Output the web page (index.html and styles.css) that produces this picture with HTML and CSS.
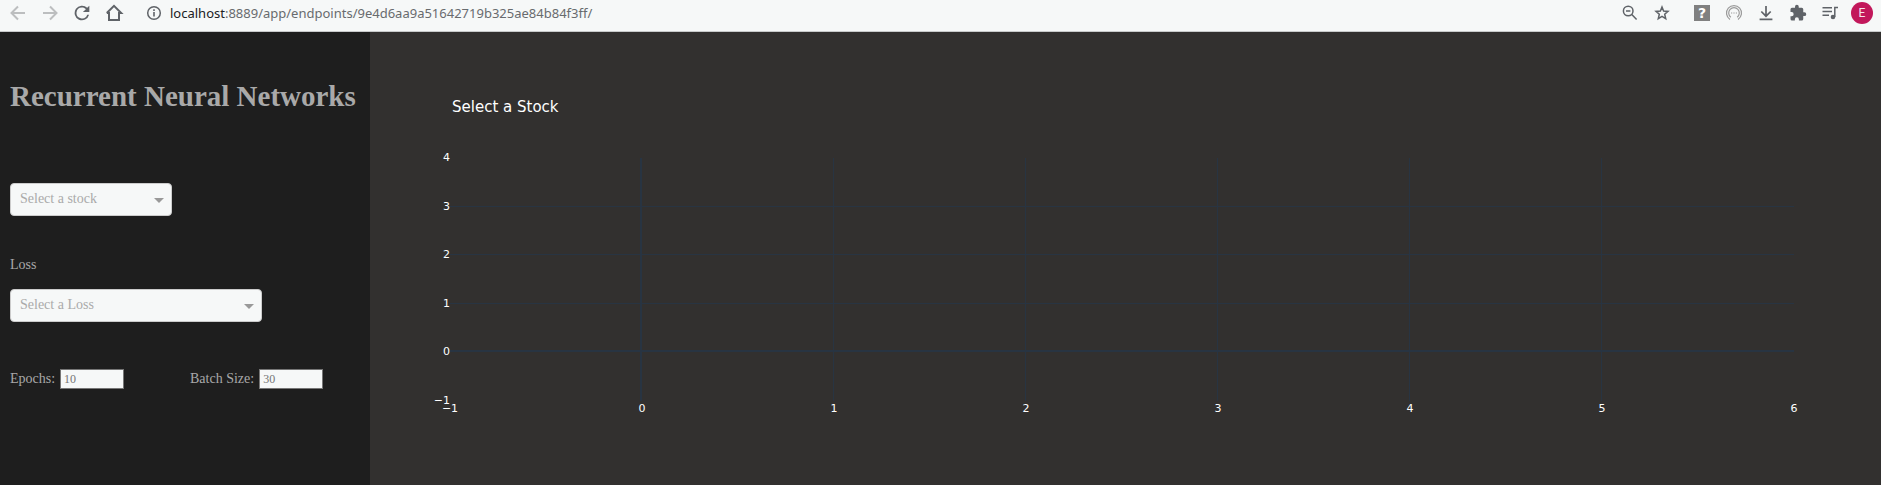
FILE: index.html
```html
<!DOCTYPE html>
<html lang="en">
<head>
<meta charset="utf-8">
<meta name="viewport" content="width=device-width, initial-scale=1">
<title>Recurrent Neural Networks</title>
<link rel="stylesheet" href="styles.css">
</head>
<body>
<header class="toolbar">
  <button class="tool tool-off" aria-label="Back"><svg viewBox="0 0 22 22"><path class="line" d="M18 11H5M11 4.500L4.500 11L11 17.500"/></svg></button>
  <button class="tool tool-off" aria-label="Forward"><svg viewBox="0 0 22 22"><path class="line" d="M4 11H17M11 4.500L17.500 11L11 17.500"/></svg></button>
  <button class="tool" aria-label="Reload"><svg viewBox="0 0 24 24"><path d="M17.650 6.350A8 8 0 1 0 19.730 14H17.650A6 6 0 1 1 12 6c1.660 0 3.140.69 4.220 1.780L13 11h7V4z"/></svg></button>
  <button class="tool" aria-label="Home"><svg viewBox="0 0 22 22"><path class="line" d="M6 10.500V18H16V10.500M3.800 11L11 3.800L18.200 11H15M7 11H3.800"/></svg></button>
  <div class="address">
    <button class="tool" aria-label="Site information"><svg viewBox="0 0 22 22"><circle class="line thin" cx="11" cy="11" r="6.300"/><path d="M10.200 10h1.600v4.600h-1.600zM10.200 7.200h1.600v1.700h-1.600z"/></svg></button>
    <span class="url"><span class="host">localhost</span>:8889/app/endpoints/9e4d6aa9a51642719b325ae84b84f3ff/</span>
  </div>
  <button class="tool" aria-label="Zoom"><svg viewBox="0 0 22 22"><circle class="line thin" cx="9.200" cy="9" r="4.800"/><path class="line thin" d="M12.800 12.600L17.600 17.600M7 9H11.400"/></svg></button>
  <button class="tool" aria-label="Bookmark"><svg viewBox="0 0 22 22"><path class="line thin" d="M11 5L12.600 9L17 9.400L13.700 12.200L14.700 16.600L11 14.300L7.300 16.600L8.300 12.200L5 9.400L9.400 9Z"/></svg></button>
  <button class="tool tool-first" aria-label="Help extension"><span class="help">?</span></button>
  <button class="tool" aria-label="Chat extension"><svg viewBox="0 0 22 22"><g class="ring"><path d="M7 17.400A7.500 7.500 0 1 1 15 17.400"/><path d="M7.800 15.200A5.300 5.300 0 1 1 14.200 15.200"/><path d="M8 11h1.200M10.400 11h1.200M12.800 11h1.200"/></g></svg></button>
  <button class="tool" aria-label="Downloads"><svg viewBox="0 0 22 22"><path class="line mid" d="M11 4V14M6.300 9.500L11 14.200L15.700 9.500M4.600 17.300H17.400"/></svg></button>
  <button class="tool" aria-label="Extensions"><svg class="puzzle" viewBox="0 0 24 24"><path d="M20.500 11H19V7a2 2 0 0 0-2-2h-4V3.500a2.500 2.500 0 0 0-5 0V5H4a2 2 0 0 0-2 2v3.800h1.500a2.700 2.700 0 0 1 0 5.400H2V20a2 2 0 0 0 2 2h3.800v-1.500a2.700 2.700 0 0 1 5.400 0V22H17a2 2 0 0 0 2-2v-4h1.500a2.500 2.500 0 0 0 0-5z"/></svg></button>
  <button class="tool" aria-label="Media"><svg viewBox="0 0 22 22"><path class="line thin" d="M3.500 5.700H13M3.500 9.500H13M3.500 13.300H10M15.800 15V5.400H19"/><circle cx="14" cy="15" r="2.300"/></svg></button>
  <button class="tool avatar" aria-label="Profile">E</button>
</header>
<div class="page">
  <aside class="sidebar">
    <h1>Recurrent Neural Networks</h1>
    <form class="form">
      <div class="select select-stock">
        <select aria-label="Stock"><option>Select a stock</option></select>
      </div>
      <label class="loss-label" for="loss">Loss</label>
      <div class="select select-loss">
        <select id="loss"><option>Select a Loss</option></select>
      </div>
      <div class="numbers">
        <div class="field"><label for="epochs">Epochs:</label><input id="epochs" type="text" placeholder="10"></div>
        <div class="field"><label for="batch">Batch Size:</label><input id="batch" type="text" placeholder="30"></div>
      </div>
    </form>
  </aside>
  <main class="chart">
    <h2>Select a Stock</h2>
    <div class="plot">
      <div class="y-axis"><span>4</span><span>3</span><span>2</span><span>1</span><span>0</span><span>−1</span></div>
      <div class="grid">
        <div class="rows"><i></i><i></i><i></i><i class="zero-row"></i><i></i></div>
        <div class="cols"><i class="zero-col"></i><i></i><i></i><i></i><i></i><i></i><i></i></div>
      </div>
      <div class="x-axis"><span>−1</span><span>0</span><span>1</span><span>2</span><span>3</span><span>4</span><span>5</span><span>6</span></div>
    </div>
  </main>
</div>
</body>
</html>
```
FILE: styles.css
```css
* { box-sizing: border-box; }

body {
  margin: 0;
  min-height: 100vh;
  display: flex;
  flex-direction: column;
  background: #32302f;
  color: #a9a9a9;
  font: 14px/16px "Liberation Serif", "Times New Roman", serif;
}

/* Browser toolbar */
.toolbar {
  display: flex;
  align-items: flex-start;
  gap: 10px;
  padding: 2px 8px 7px 7px;
  background: #f6f8f8;
  border-bottom: 1px solid #c8cacb;
}
.tool {
  flex: none;
  width: 22px;
  height: 22px;
  padding: 0;
  border: 0;
  background: none;
  color: #5f6368;
  display: flex;
  align-items: center;
  justify-content: center;
}
.tool svg { width: 22px; height: 22px; fill: currentColor; }
.tool .puzzle { width: 18px; height: 18px; }
.tool-off { color: #bcbebf; }
.tool-first { margin-left: 8px; }
.tool .line { fill: none; stroke: currentColor; stroke-width: 2; }
.tool .mid { stroke-width: 1.7; }
.tool .thin { stroke-width: 1.5; }
.ring { fill: none; stroke: #9b9b9b; stroke-width: 1.2; }
.address {
  flex: 1;
  display: flex;
  align-items: center;
  gap: 5px;
  padding-left: 8px;
}
.url { font: 13px/22px "Noto Sans", sans-serif; color: #686b6e; }
.host { color: #202124; }
.help {
  width: 16px;
  height: 16px;
  background: #808080;
  color: #fff;
  font: bold 14px/16px "DejaVu Sans", sans-serif;
}
.avatar {
  border-radius: 50%;
  background: #c2185b;
  color: #f6e4ec;
  font: 12px/22px Roboto, sans-serif;
}

.page { flex: 1; display: flex; }

/* Sidebar */
.sidebar { flex: none; width: 370px; padding: 48px 10px; background: #1e1e1e; }
h1 { margin: 0; font-size: 29px; line-height: 33px; white-space: nowrap; }
.form { display: flex; flex-direction: column; align-items: flex-start; padding-top: 70px; }
.select { position: relative; }
.select-stock { width: 162px; }
.select-loss { width: 252px; }
.select::after {
  content: "";
  position: absolute;
  right: 8px;
  top: 15px;
  border: 5px solid transparent;
  border-top-color: #999;
  border-bottom: 0;
  pointer-events: none;
}
select {
  display: block;
  width: 100%;
  height: 33px;
  padding: 0 9px 1px;
  appearance: none;
  border: 1px solid #ccc;
  border-radius: 4px;
  background: #f6f8f8;
  color: #aaa;
  font: inherit;
}
.loss-label { margin: 41px 0 16px; }
.numbers { display: grid; grid-template-columns: 180px auto; padding-top: 47px; }
.field { display: flex; align-items: center; gap: 5px; }
input {
  width: 64px;
  height: 20px;
  padding: 1px 3px;
  border: 1px solid #767676;
  background: #f6f8f8;
  font: 12px/16px "Liberation Serif", serif;
}
input::placeholder { color: #757575; }

/* Chart */
.chart {
  flex: 1;
  padding: 65px 87px 60px 60px;
  color: #fff;
  font: 11px/12px "DejaVu Sans", Verdana, sans-serif;
}
h2 { margin: 0 0 41px 22px; font-size: 15px; line-height: 20px; font-weight: 400; }
.plot { display: grid; grid-template-columns: 20px 1fr; grid-template-rows: 243px auto; }
.y-axis { display: flex; flex-direction: column; justify-content: space-between; align-items: flex-end; }
.y-axis span { height: 0; line-height: 0; }
.grid { display: grid; }
.rows, .cols { grid-area: 1 / 1; display: grid; }
.rows { grid-template-rows: repeat(5, 1fr); }
.cols { grid-template-columns: repeat(7, 1fr); }
.rows i { border-bottom: 1px solid #283442; }
.rows i:last-child { border: 0; }
.cols i { border-right: 1px solid #283442; }
.cols i:last-child { border: 0; }
.rows .zero-row { border-bottom-width: 2px; }
.cols .zero-col { border-right-width: 2px; }
.x-axis { grid-column: 2; display: flex; justify-content: space-between; padding-top: 2px; }
.x-axis span { width: 0; display: flex; justify-content: center; }
```
